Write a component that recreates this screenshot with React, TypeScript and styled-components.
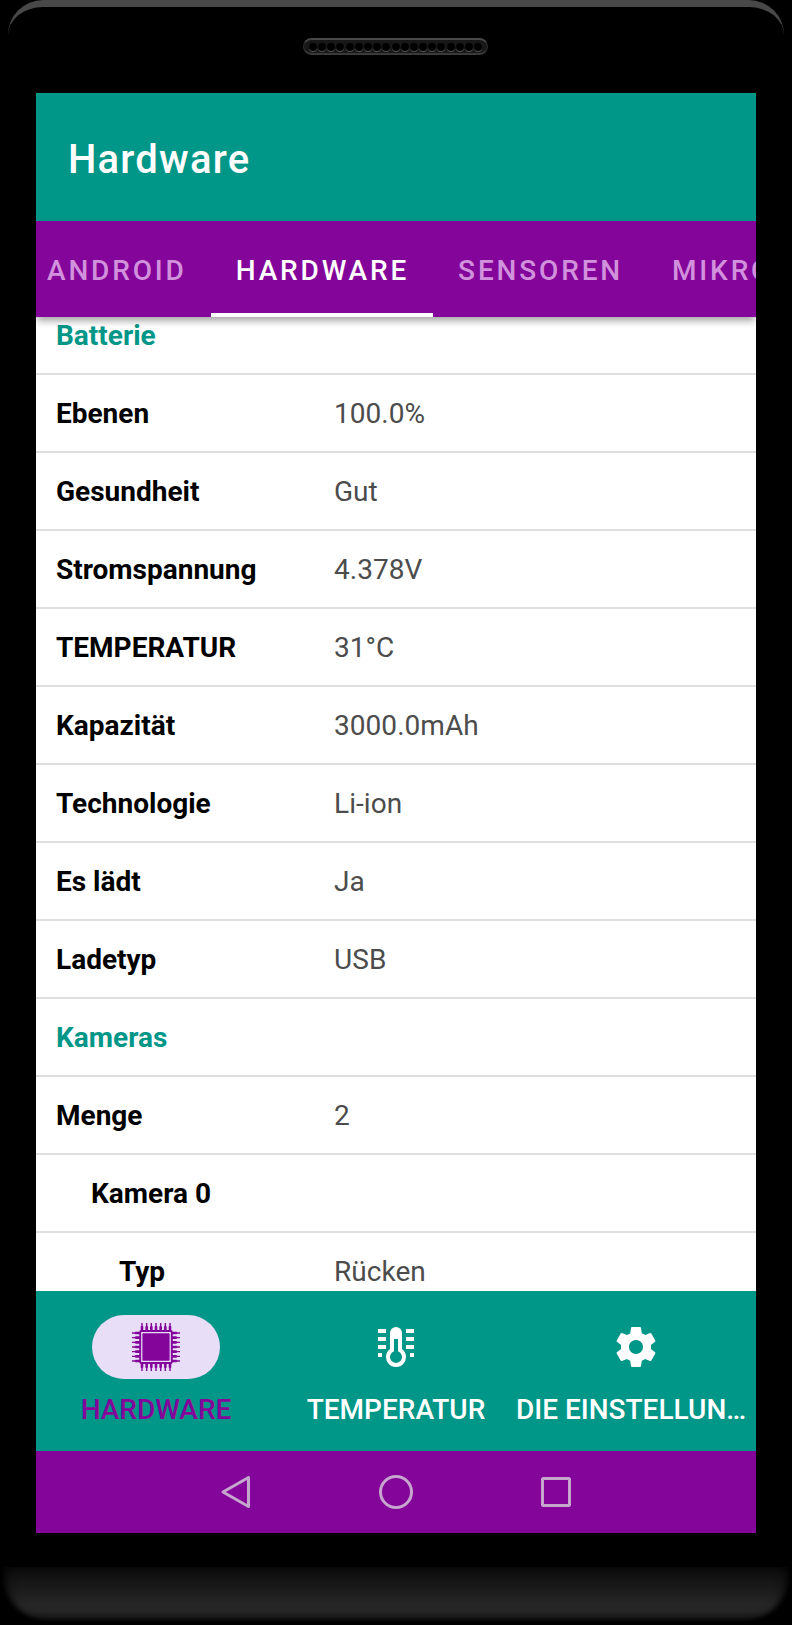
import React from 'react';
import styled, { createGlobalStyle } from 'styled-components';

const teal = '#009688';
const purple = '#84059a';

const GlobalStyle = createGlobalStyle`
  *, *::before, *::after { box-sizing: border-box; }
  body { margin: 0; background: #000; font-family: Roboto, sans-serif; }
`;

const Device = styled.div`
  width: 792px;
  height: 1625px;
  background: #000;
  display: flex;
  flex-direction: column;
  overflow: hidden;
`;

const TopBezel = styled.div`
  height: 93px;
  flex: none;
  margin: 0 8px;
  border-top: 7px solid #484848;
  border-radius: 35px 35px 0 0;
  display: flex;
  justify-content: center;
  padding: 31px 1px 0 0;
`;

const Speaker = styled.div`
  width: 185px;
  height: 17px;
  display: flex;
  align-items: center;
  justify-content: center;
  gap: 1.2px;
  background: #181818;
  border-radius: 9px;
  border: 1px solid #2c2c2c;
  border-top: 2px solid #484848;
  border-bottom: 2px solid #3a3a3a;
`;

const Hole = styled.span`
  width: 8px;
  height: 8px;
  flex: none;
  border-radius: 50%;
  background: #000;
  box-shadow: 0 1px 0 #555;
`;

const Screen = styled.main`
  width: 720px;
  height: 1440px;
  flex: none;
  margin: 0 36px;
  background: #fff;
  display: flex;
  flex-direction: column;
  overflow: hidden;
`;

const AppBar = styled.header`
  height: 128px;
  flex: none;
  padding: 0 32px;
  display: flex;
  align-items: center;
  background: ${teal};
`;

const Title = styled.h1`
  margin: 4px 0 0;
  color: #fff;
  font-size: 40px;
  font-weight: 500;
  letter-spacing: 1.2px;
`;

const Tabs = styled.nav`
  height: 96px;
  flex: none;
  display: flex;
  background: ${purple};
  box-shadow: 0 5px 7px -1px rgba(0, 0, 0, 0.35);
  position: relative;
`;

const Tab = styled.a<{ $active?: boolean }>`
  flex: none;
  padding: 6px 24px 0 25px;
  display: flex;
  align-items: center;
  font-size: 28px;
  font-weight: 500;
  letter-spacing: 2.84px;
  color: ${p => (p.$active ? '#fff' : '#d191dc')};
  border-bottom: 4px solid ${p => (p.$active ? '#fff' : 'transparent')};
  &:first-child { margin-left: -14px; }
`;

const List = styled.div`
  flex: 1;
  min-height: 0;
  overflow: hidden;
`;

const ListContent = styled.div`
  margin-top: -20px;
`;

const Row = styled.div`
  height: 78px;
  display: grid;
  grid-template-columns: 298px 1fr;
  align-items: center;
  border-bottom: 2px solid #dedede;
  font-size: 28px;
`;

const Label = styled.span<{ $indent: number; $section?: boolean }>`
  padding-left: ${p => p.$indent}px;
  font-weight: 700;
  color: ${p => (p.$section ? teal : '#000')};
`;

const Value = styled.span`
  color: #4c4c4c;
  letter-spacing: 0.05px;
`;

const BottomNav = styled.nav`
  height: 160px;
  flex: none;
  display: grid;
  grid-template-columns: repeat(3, 240px);
  background: ${teal};
`;

const NavItem = styled.a<{ $active?: boolean }>`
  display: flex;
  flex-direction: column;
  align-items: center;
  padding-top: 24px;
  color: ${p => (p.$active ? purple : '#fff')};
`;

const Pill = styled.span<{ $active?: boolean }>`
  width: 128px;
  height: 64px;
  border-radius: 32px;
  display: flex;
  align-items: center;
  justify-content: center;
  background: ${p => (p.$active ? '#e8def8' : 'transparent')};
`;

const NavLabel = styled.span`
  max-width: 100%;
  margin-top: 14px;
  font-size: 28px;
  line-height: 33px;
  font-weight: 500;
  white-space: nowrap;
  overflow: hidden;
  text-overflow: ellipsis;
`;

const SystemBar = styled.footer`
  height: 82px;
  flex: none;
  display: flex;
  align-items: center;
  justify-content: center;
  gap: 112px;
  background: ${purple};
`;

const Chin = styled.div`
  height: 57px;
  margin: 34px 2px 0;
  border-radius: 0 0 46px 46px;
  overflow: hidden;
  background: linear-gradient(#0b0b0b, #1b1b1b 40%, #262626 65%, #252525 78%, #101010 94%, #000);
  box-shadow: inset 10px 0 12px -8px #000, inset -10px 0 12px -8px #000, inset 0 -3px 5px #000;
`;

const pins = [-14, -9.33, -4.67, 0, 4.67, 9.33, 14];

const CpuIcon = () => (
  <svg width="48" height="48" viewBox="-24 -24 48 48" fill="currentColor">
    <rect x="-15.8" y="-16" width="31.6" height="32" rx="1" fill="none" stroke="currentColor" strokeWidth="1.9" />
    <rect x="-13.6" y="-13.8" width="27.2" height="27.6" rx="1" />
    {[0, 90, 180, 270].map(angle => (
      <g key={angle} transform={`rotate(${angle})`}>
        {pins.map(x => (
          <path key={x} d={`M${x - 1.3} -16V-20.5L${x - 0.7} -21V-24H${x + 0.7}V-21L${x + 1.3} -20.5V-16Z`} />
        ))}
      </g>
    ))}
  </svg>
);

const ThermometerIcon = () => (
  <svg width="48" height="48" viewBox="0 0 48 48" fill="currentColor">
    <path
      fillRule="evenodd"
      d="M24 4a6 6 0 0 0-6 6v16a10 10 0 1 0 12 0V10a6 6 0 0 0-6-6zM22 16h4v12.3a6 6 0 1 1-4 0z"
    />
    <path d="M6 6h8v4H6zM6 14h8v4H6zM6 22h8v4H6zM6 30h4v4H6zM34 6h8v4h-8zM34 14h8v4h-8zM34 22h8v4h-8zM38 30h4v4h-4z" />
  </svg>
);

const GearIcon = () => (
  <svg width="48" height="48" viewBox="0 0 24 24" fill="currentColor">
    <path d="M19.43 12.98c.04-.32.07-.64.07-.98s-.03-.66-.07-.98l2.11-1.65c.19-.15.24-.42.12-.64l-2-3.46c-.12-.22-.39-.3-.61-.22l-2.49 1c-.52-.4-1.08-.73-1.69-.98l-.38-2.65C14.46 2.18 14.25 2 14 2h-4c-.25 0-.46.18-.49.42l-.38 2.65c-.61.25-1.17.59-1.69.98l-2.49-1c-.23-.09-.49 0-.61.22l-2 3.46c-.13.22-.07.49.12.64l2.11 1.65c-.04.32-.07.65-.07.98s.03.66.07.98l-2.11 1.65c-.19.15-.24.42-.12.64l2 3.46c.12.22.39.3.61.22l2.49-1c.52.4 1.08.73 1.69.98l.38 2.65c.03.24.24.42.49.42h4c.25 0 .46-.18.49-.42l.38-2.65c.61-.25 1.17-.59 1.69-.98l2.49 1c.23.09.49 0 .61-.22l2-3.46c.12-.22.07-.49-.12-.64l-2.11-1.65zM12 15.5c-1.93 0-3.5-1.57-3.5-3.5s1.57-3.5 3.5-3.5 3.5 1.57 3.5 3.5-1.57 3.5-3.5 3.5z" />
  </svg>
);

const SystemIcon = styled.svg`
  width: 48px;
  height: 48px;
  fill: none;
  stroke: #c5a6cc;
  stroke-width: 3;
  stroke-linejoin: round;
`;

type Entry = { label: string; value?: string; indent?: number; section?: boolean };

const entries: Entry[] = [
  { label: 'Batterie', section: true },
  { label: 'Ebenen', value: '100.0%' },
  { label: 'Gesundheit', value: 'Gut' },
  { label: 'Stromspannung', value: '4.378V' },
  { label: 'TEMPERATUR', value: '31°C' },
  { label: 'Kapazität', value: '3000.0mAh' },
  { label: 'Technologie', value: 'Li-ion' },
  { label: 'Es lädt', value: 'Ja' },
  { label: 'Ladetyp', value: 'USB' },
  { label: 'Kameras', section: true },
  { label: 'Menge', value: '2' },
  { label: 'Kamera 0', indent: 55 },
  { label: 'Typ', value: 'Rücken', indent: 83 },
];

export default function App() {
  return (
    <Device>
      <GlobalStyle />
      <TopBezel>
        <Speaker>
          {Array.from({ length: 19 }, (_, i) => (
            <Hole key={i} />
          ))}
        </Speaker>
      </TopBezel>
      <Screen>
        <AppBar>
          <Title>Hardware</Title>
        </AppBar>
        <Tabs>
          <Tab>ANDROID</Tab>
          <Tab $active>HARDWARE</Tab>
          <Tab>SENSOREN</Tab>
          <Tab>MIKROFON</Tab>
        </Tabs>
        <List>
          <ListContent>
            {entries.map(e => (
              <Row key={e.label}>
                <Label $indent={e.indent ?? 20} $section={e.section}>{e.label}</Label>
                <Value>{e.value}</Value>
              </Row>
            ))}
          </ListContent>
        </List>
        <BottomNav>
          <NavItem $active>
            <Pill $active><CpuIcon /></Pill>
            <NavLabel>HARDWARE</NavLabel>
          </NavItem>
          <NavItem>
            <Pill><ThermometerIcon /></Pill>
            <NavLabel>TEMPERATUR</NavLabel>
          </NavItem>
          <NavItem>
            <Pill><GearIcon /></Pill>
            <NavLabel>DIE EINSTELLUNGEN</NavLabel>
          </NavItem>
        </BottomNav>
        <SystemBar>
          <SystemIcon viewBox="0 0 48 48"><path d="M36.5 9.5V38.5L11 24Z" /></SystemIcon>
          <SystemIcon viewBox="0 0 48 48"><circle cx="24" cy="24" r="15.5" /></SystemIcon>
          <SystemIcon viewBox="0 0 48 48"><rect x="10.5" y="10.5" width="27" height="27" rx="1" /></SystemIcon>
        </SystemBar>
      </Screen>
      <Chin />
    </Device>
  );
}
